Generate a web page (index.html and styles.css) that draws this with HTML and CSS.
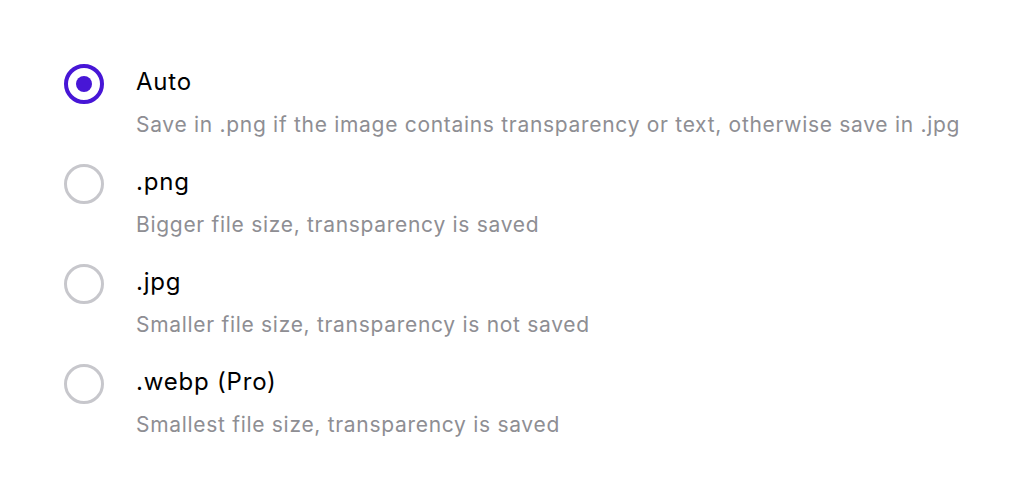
FILE: index.html
```html
<!DOCTYPE html>
<html>
<head>
<meta charset="utf-8">
<link rel="stylesheet" href="styles.css">
</head>
<body>
<div class="list">
  <div class="option">
    <span class="radio checked"></span>
    <div class="text">
      <div class="title">Auto</div>
      <div class="desc">Save in .png if the image contains transparency or text, otherwise save in .jpg</div>
    </div>
  </div>
  <div class="option">
    <span class="radio"></span>
    <div class="text">
      <div class="title">.png</div>
      <div class="desc">Bigger file size, transparency is saved</div>
    </div>
  </div>
  <div class="option">
    <span class="radio"></span>
    <div class="text">
      <div class="title">.jpg</div>
      <div class="desc">Smaller file size, transparency is not saved</div>
    </div>
  </div>
  <div class="option">
    <span class="radio"></span>
    <div class="text">
      <div class="title">.webp (Pro)</div>
      <div class="desc">Smallest file size, transparency is saved</div>
    </div>
  </div>
</div>
</body>
</html>
```

FILE: styles.css
```css
html, body {
  margin: 0;
  padding: 0;
  background: #ffffff;
}
body {
  font-family: Inter, "Noto Sans", sans-serif;
}
.list {
  padding: 64px 0 0 64px;
  display: flex;
  flex-direction: column;
}
.option {
  display: flex;
  align-items: flex-start;
  gap: 32px;
  height: 100px;
}
.radio {
  box-sizing: border-box;
  width: 40px;
  height: 40px;
  border-radius: 50%;
  border: 3px solid #c7c7cc;
  flex-shrink: 0;
  display: flex;
  align-items: center;
  justify-content: center;
}
.radio.checked {
  border: 4px solid #4716d6;
}
.radio.checked::after {
  content: "";
  width: 16px;
  height: 16px;
  border-radius: 50%;
  background: #4716d6;
}
.title {
  margin-top: 3px;
  font-size: 24px;
  line-height: 30px;
  letter-spacing: 0.8px;
  color: #000000;
}
.desc {
  margin-top: 16px;
  font-size: 21px;
  line-height: 24px;
  letter-spacing: 0.7px;
  color: #8e8e93;
}
```
